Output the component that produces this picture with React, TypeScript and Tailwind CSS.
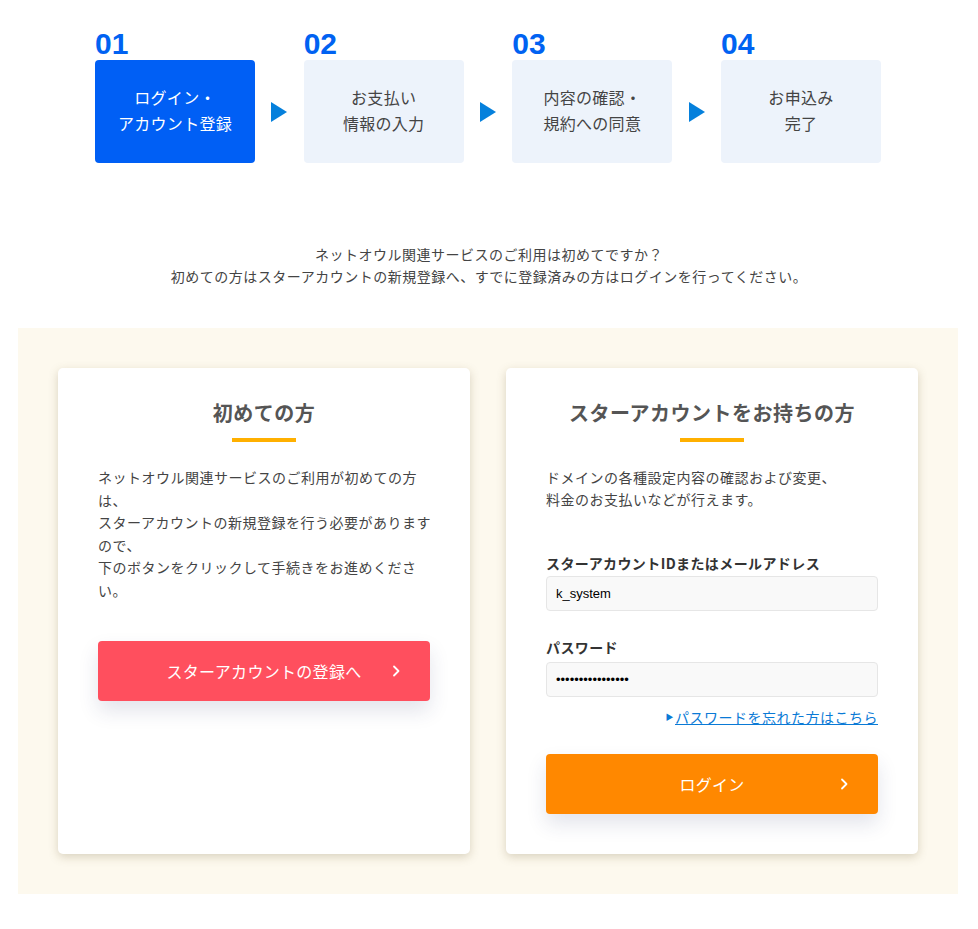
import React from "react";

const jp = { fontFamily: '"Noto Sans CJK JP", "Noto Sans", sans-serif' };

function Chevron() {
  return (
    <svg width="10" height="14" viewBox="0 0 10 14" fill="none">
      <path d="M3 2.5 L7.5 7 L3 11.5" stroke="white" strokeWidth="1.8" strokeLinecap="round" strokeLinejoin="round" />
    </svg>
  );
}

function Arrow() {
  return (
    <svg width="16" height="20" viewBox="0 0 16 20">
      <path d="M0 0 L16 10 L0 20 Z" fill="#0580DC" />
    </svg>
  );
}

const steps = [
  { n: "01", l1: "ログイン・", l2: "アカウント登録", active: true },
  { n: "02", l1: "お支払い", l2: "情報の入力" },
  { n: "03", l1: "内容の確認・", l2: "規約への同意" },
  { n: "04", l1: "お申込み", l2: "完了" },
];

export default function App() {
  return (
    <div className="w-[978px] min-h-[929px] bg-white text-[#444]" style={jp}>
      <div className="pt-[27px] pl-[95px]">
        <div className="w-[786px] flex items-end justify-between">
          {steps.map((s, i) => (
            <React.Fragment key={s.n}>
              <div className="w-[160px] flex flex-col">
                <div
                  className="h-[33px] text-[30px] leading-[33px] font-bold text-[#0062F2]"
                  style={{ fontFamily: '"Liberation Sans", Arial, sans-serif' }}
                >
                  {s.n}
                </div>
                <div
                  className={
                    "h-[103px] pb-[3px] rounded-[4px] flex flex-col items-center justify-center text-[16px] leading-[26px] tracking-[0.3px] " +
                    (s.active ? "bg-[#005FF5] text-white" : "bg-[#EDF3FB] text-[#444]")
                  }
                >
                  <div>{s.l1}</div>
                  <div>{s.l2}</div>
                </div>
              </div>
              {i < steps.length - 1 && (
                <div className="h-[103px] flex items-center">
                  <Arrow />
                </div>
              )}
            </React.Fragment>
          ))}
        </div>
      </div>

      <div className="mt-[80px] text-center text-[14px] leading-[22px] text-[#444] tracking-[0.5px]">
        <p>ネットオウル関連サービスのご利用は初めてですか？</p>
        <p>初めての方はスターアカウントの新規登録へ、すでに登録済みの方はログインを行ってください。</p>
      </div>

      <div className="mt-[41px] mx-[18px] w-[940px] bg-[#FDF9EE] p-[40px] grid grid-cols-2 gap-[36px]">
        <div className="bg-white rounded-[5px] shadow-[0_3px_10px_rgba(110,95,50,0.25)] px-[40px] pt-[30px] pb-[40px] flex flex-col">
          <h2 className="text-center text-[20px] leading-[30px] font-bold text-[#555] tracking-[0.5px]">初めての方</h2>
          <div className="mx-auto mt-[10px] w-[64px] h-[4px] bg-[#FFB000]" />
          <div className="mt-[24px] text-[14px] leading-[22.5px] text-[#444] tracking-[0.5px]">
            <div className="whitespace-nowrap">ネットオウル関連サービスのご利用が初めての方</div>
            <div>は、</div>
            <div className="whitespace-nowrap">スターアカウントの新規登録を行う必要があります</div>
            <div>ので、</div>
            <div className="whitespace-nowrap">下のボタンをクリックして手続きをお進めくださ</div>
            <div>い。</div>
          </div>
          <button className="mt-[40px] h-[60px] w-full rounded-[4px] bg-[#FF4F5E] text-white text-[16px] tracking-[0.3px] relative flex items-center justify-center shadow-[0_10px_20px_rgba(40,45,100,0.13)]">
            <span>スターアカウントの登録へ</span>
            <span className="absolute right-[29px] top-1/2 -translate-y-1/2 flex">
              <Chevron />
            </span>
          </button>
        </div>

        <div className="bg-white rounded-[5px] shadow-[0_3px_10px_rgba(110,95,50,0.25)] px-[40px] pt-[30px] pb-[40px] flex flex-col">
          <h2 className="text-center text-[20px] leading-[30px] font-bold text-[#555] tracking-[0.5px]">スターアカウントをお持ちの方</h2>
          <div className="mx-auto mt-[10px] w-[64px] h-[4px] bg-[#FFB000]" />
          <div className="mt-[24px] text-[14px] leading-[22px] text-[#444] tracking-[0.5px]">
            <div>ドメインの各種設定内容の確認および変更、</div>
            <div>料金のお支払いなどが行えます。</div>
          </div>
          <label className="mt-[43px] text-[14px] leading-[20px] font-bold text-[#333] tracking-[0.4px]">スターアカウントIDまたはメールアドレス</label>
          <div
            className="mt-[3px] h-[35px] rounded-[4px] border border-[#E6E6E6] bg-[#F9F9F9] px-[9px] flex items-center text-[13px] text-black"
            style={{ fontFamily: '"Liberation Sans", Arial, sans-serif' }}
          >
            k_system
          </div>
          <label className="mt-[26px] text-[14px] leading-[20px] font-bold text-[#333] tracking-[0.4px]">パスワード</label>
          <div
            className="mt-[5px] h-[35px] rounded-[4px] border border-[#E6E6E6] bg-[#F9F9F9] px-[9px] flex items-center text-[13px] text-black"
            style={{ fontFamily: '"Liberation Sans", Arial, sans-serif' }}
          >
            ••••••••••••••••
          </div>
          <div className="mt-[10px] h-[20px] flex justify-end items-center text-[14px] text-[#0A7AD6] tracking-[0.5px]">
            <span className="text-[8px] mr-[1px]">▶</span>
            <a className="underline leading-[20px]">パスワードを忘れた方はこちら</a>
          </div>
          <button className="mt-[27px] h-[60px] w-full rounded-[4px] bg-[#FF8800] text-white text-[16px] tracking-[0.3px] relative flex items-center justify-center shadow-[0_10px_20px_rgba(40,45,100,0.13)]">
            <span>ログイン</span>
            <span className="absolute right-[29px] top-1/2 -translate-y-1/2 flex">
              <Chevron />
            </span>
          </button>
        </div>
      </div>
    </div>
  );
}
